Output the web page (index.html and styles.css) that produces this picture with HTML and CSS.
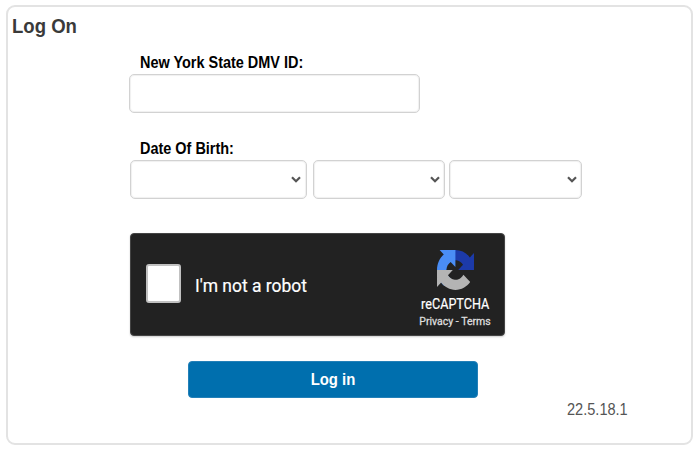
FILE: index.html
```html
<!DOCTYPE html>
<html lang="en">
<head>
<meta charset="utf-8">
<title>Log On</title>
<link rel="stylesheet" href="styles.css">
</head>
<body>
<main class="card">
  <h1 class="title">Log On</h1>
  <form class="form">
    <label class="label id-label" for="dmv">New York State DMV ID:</label>
    <input class="field id-field" id="dmv" type="text">
    <div class="label dob-label">Date Of Birth:</div>
    <div class="dates">
      <div class="field select month"><svg class="chevron" viewBox="0 0 10 7"><path d="M1 1.2 5 5.2 9 1.2"/></svg></div>
      <div class="field select day"><svg class="chevron" viewBox="0 0 10 7"><path d="M1 1.2 5 5.2 9 1.2"/></svg></div>
      <div class="field select year"><svg class="chevron" viewBox="0 0 10 7"><path d="M1 1.2 5 5.2 9 1.2"/></svg></div>
    </div>
    <div class="captcha">
      <span class="check"></span>
      <span class="robot">I'm not a robot</span>
      <div class="brand">
        <svg class="logo" viewBox="0 0 64 64" preserveAspectRatio="none">
          <path fill="#1c3aa9" d="M64 31.955l-.033-1.37V4.687l-7.16 7.16C50.948 4.674 42.033.093 32.05.093c-10.4 0-19.622 4.96-25.458 12.64l11.736 11.86a15.55 15.55 0 0 1 4.754-5.334c2.05-1.6 4.952-2.906 8.968-2.906.485 0 .86.057 1.135.163 4.976.393 9.288 3.14 11.828 7.124l-8.307 8.307L64 31.953"/>
          <path fill="#4a8df5" d="M31.862.094l-1.37.033H4.594l7.16 7.16C4.58 13.147 0 22.06 0 32.046c0 10.4 4.96 19.622 12.64 25.458L24.5 45.768a15.55 15.55 0 0 1-5.334-4.754c-1.6-2.05-2.906-4.952-2.906-8.968 0-.485.057-.86.163-1.135.393-4.976 3.14-9.288 7.124-11.828l8.307 8.307L31.86.095"/>
          <path fill="#b4b4b4" d="M.001 32.045l.033 1.37v25.898l7.16-7.16c5.86 7.173 14.774 11.754 24.76 11.754 10.4 0 19.622-4.96 25.458-12.64l-11.736-11.86a15.55 15.55 0 0 1-4.754 5.334c-2.05 1.6-4.952 2.906-8.968 2.906-.485 0-.86-.057-1.135-.163-4.976-.393-9.288-3.14-11.828-7.124l8.307-8.307c-10.522.04-22.4.066-27.295-.005"/>
        </svg>
        <span class="brand-name">reCAPTCHA</span>
        <span class="links">Privacy - Terms</span>
      </div>
    </div>
    <button class="login" type="button"><span class="login-text">Log in</span></button>
  </form>
  <div class="version">22.5.18.1</div>
</main>
</body>
</html>
```
FILE: styles.css
```css
* { box-sizing: border-box; }
body {
  margin: 0;
  padding: 5px 6px;
  background: #fff;
  font-family: "Liberation Sans", Arial, sans-serif;
}
.card {
  width: 687px;
  height: 440px;
  border: 2px solid #e3e3e3;
  border-radius: 9px;
}
.title {
  width: max-content;
  margin: 7px 0 0 4px;
  font-size: 20.5px;
  line-height: 24px;
  color: #3a3a3a;
  transform: scaleX(.905);
  transform-origin: left;
}
.form { margin-left: 121px; }
.label {
  display: block;
  width: max-content;
  margin-left: 11px;
  font-size: 16px;
  font-weight: bold;
  line-height: 18px;
  color: #000;
  transform: scaleX(.903);
  transform-origin: left;
}
.id-label { margin-top: 16px; }
.field {
  display: block;
  height: 39px;
  border: 1px solid #d2d2d2;
  border-radius: 5px;
  background: #fff;
  box-shadow: inset 0 0 1px 1px #f0f0f0;
}
.id-field { width: 291px; margin-top: 2px; }
.dob-label { margin-top: 27px; }
.dates { display: flex; margin: 2px 0 0 1px; }
.select {
  display: flex;
  align-items: center;
  justify-content: flex-end;
  padding-right: 4px;
}
.month { width: 177px; margin-right: 6px; padding-right: 5px; }
.day { width: 132px; margin-right: 4px; }
.year { width: 133px; }
.chevron {
  width: 10px;
  height: 7px;
  fill: none;
  stroke: #555;
  stroke-width: 2.2;
}
.captcha {
  display: flex;
  align-items: center;
  width: 375px;
  height: 103px;
  margin: 34px 0 0 1px;
  padding-left: 15px;
  border: 1px solid #444;
  border-radius: 4px;
  background: #222;
  box-shadow: 0 1px 2px rgba(0, 0, 0, .2);
  font-family: Roboto, sans-serif;
}
.check {
  flex: none;
  width: 35px;
  height: 39px;
  margin-top: -2px;
  border: 2px solid #c1c1c1;
  border-radius: 3px;
  background: #fff;
}
.robot {
  flex: none;
  width: 208px;
  margin: 1px 0 0 14px;
  font-size: 19px;
  color: #fff;
  transform: scaleX(.92);
  transform-origin: left;
  white-space: nowrap;
  -webkit-text-stroke: .2px #fff;
}
.brand {
  display: flex;
  flex: none;
  flex-direction: column;
  align-items: center;
  width: 98px;
  margin-left: 3px;
  color: #fff;
  white-space: nowrap;
}
.logo { width: 37px; height: 40px; margin-top: 9px; }
.brand-name {
  margin-top: 6px;
  font-size: 14.5px;
  line-height: 18px;
  transform: scaleX(.87);
  -webkit-text-stroke: .2px #fff;
}
.links {
  margin-top: 1px;
  font-size: 10.5px;
  line-height: 14px;
  color: #ddd;
  -webkit-text-stroke: .3px #ddd;
}
.login {
  display: block;
  width: 290px;
  height: 37px;
  margin: 25px 0 0 59px;
  padding: 0;
  border: 1px solid #2380b8;
  border-radius: 4px;
  background: #006fae;
  color: #fff;
  font: bold 16px/20px "Liberation Sans", Arial, sans-serif;
}
.login-text { display: inline-block; transform: scaleX(.93); }
.version {
  width: max-content;
  margin: 2px 0 0 559px;
  font-size: 16px;
  line-height: 20px;
  color: #555;
  transform: scaleX(.91);
  transform-origin: left;
}
```
